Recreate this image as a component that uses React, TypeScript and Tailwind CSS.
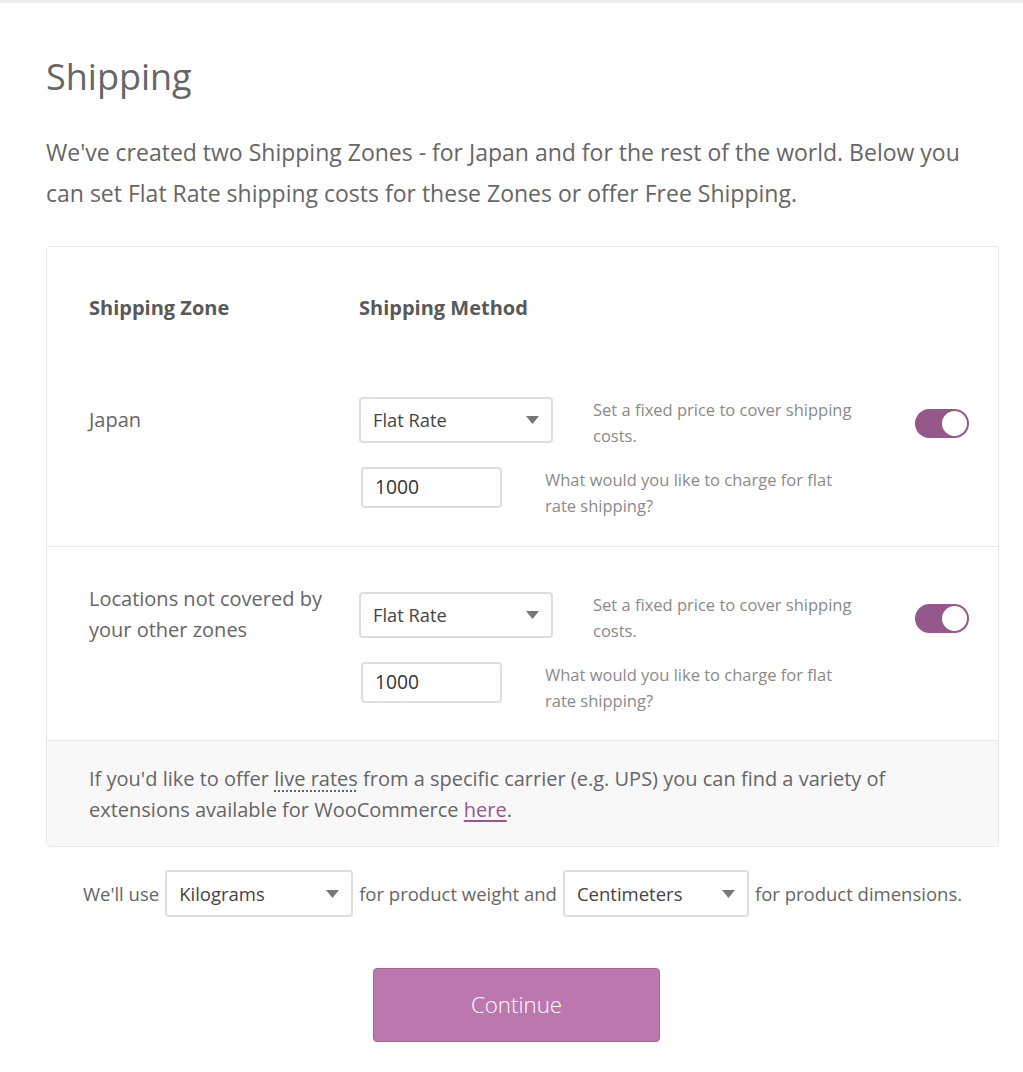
import React from "react";

const Caret: React.FC = () => (
	<svg width="13" height="8" viewBox="0 0 13 8" className="shrink-0">
		<path d="M0 0h13L6.5 8z" fill="#777" />
	</svg>
);

const Select: React.FC<{ value: string; className?: string }> = ({ value, className }) => (
	<div className={`flex items-center justify-between rounded-[4px] border-2 border-[#dedede] bg-white pl-[12px] pr-[12px] ${className ?? ""}`}>
		<span className="text-[#444]">{value}</span>
		<Caret />
	</div>
);

const Toggle: React.FC = () => (
	<div className="flex h-[29px] w-[54px] shrink-0 items-center justify-end rounded-full bg-[#96588a] pr-[2px]">
		<div className="h-[25px] w-[25px] rounded-full bg-white" />
	</div>
);

const ZoneRow: React.FC<{ zone: React.ReactNode; zoneClass: string; pad: string }> = ({ zone, zoneClass, pad }) => (
	<div className={`grid grid-cols-[270px_1fr] pl-[42px] pr-[29px] ${pad}`}>
		<div className={`text-[20px] leading-[31px] text-[#666] ${zoneClass}`}>{zone}</div>
		<div className="flex flex-col gap-[18px]">
			<div className="flex items-start">
				<Select value="Flat Rate" className="h-[46px] w-[194px] text-[18.3px]" />
				<p className="ml-[40px] w-[280px] text-[16.5px] leading-[26px] text-[#8a8a8a]">
					Set a fixed price to cover shipping
					<br />
					costs.
				</p>
				<div className="ml-auto self-center">
					<Toggle />
				</div>
			</div>
			<div className="flex items-start">
				<div className="ml-[2px] flex h-[41px] w-[141px] items-center rounded-[4px] border-2 border-[#dedede] pl-[12px] text-[19.3px] text-[#333]">
					1000
				</div>
				<p className="ml-[43px] text-[16.5px] leading-[26px] text-[#8a8a8a]">
					What would you like to charge for flat
					<br />
					rate shipping?
				</p>
			</div>
		</div>
	</div>
);

export default function App() {
	return (
		<div className="min-h-[1072px] bg-white font-['Open_Sans',sans-serif] text-[#666]">
			<div className="h-[3px] bg-[#ececec]" />
			<div className="pl-[46px] pr-[24px]">
				<h1 className="mt-[50px] text-[36px] leading-[48px] font-normal text-[#666]">Shipping</h1>
				<p className="mt-[31px] text-[23px] leading-[41px] text-[#666]">
					We've created two Shipping Zones - for Japan and for the rest of the world. Below you can set Flat Rate shipping costs for these Zones or offer Free Shipping.
				</p>

				<div className="mt-[32px] overflow-hidden rounded-[4px] border border-[#e8e8e8]">
					<div className="grid grid-cols-[270px_1fr] pl-[42px] pt-[45px] pb-[28px] text-[20px] leading-[31px] font-bold text-[#595959]">
						<div>Shipping Zone</div>
						<div>Shipping Method</div>
					</div>
					<ZoneRow zone="Japan" zoneClass="mt-[7px]" pad="pt-[46px] pb-[27px]" />
					<div className="border-t border-[#e8e8e8]">
						<ZoneRow
							zone={
								<>
									Locations not covered by
									<br />
									your other zones
								</>
							}
							zoneClass="-mt-[9px]"
							pad="pt-[45px] pb-[26px]"
						/>
					</div>
					<div className="border-t border-[#e8e8e8] bg-[#f8f8f8] pl-[42px] pr-[20px] pt-[22px] pb-[21px] text-[20px] leading-[31px] text-[#666]">
						If you'd like to offer{" "}
						<abbr className="no-underline [text-decoration:underline_dotted] underline-offset-[4px]">live rates</abbr> from a specific carrier
						(e.g. UPS) you can find a variety of
						<br />
						extensions available for WooCommerce{" "}
						<a href="#" className="text-[#96588a] underline underline-offset-[3px]">
							here
						</a>
						.
					</div>
				</div>

				<div className="mt-[23px] flex items-center justify-center gap-[6px] text-[18.5px] text-[#666]">
					<span>We'll use</span>
					<Select value="Kilograms" className="h-[47px] w-[188px] text-[18.5px]" />
					<span>for product weight and</span>
					<Select value="Centimeters" className="h-[47px] w-[186px] text-[18.5px]" />
					<span>for product dimensions.</span>
				</div>

				<div className="mt-[51px] flex justify-center pr-[12px]">
					<button className="h-[74px] w-[287px] rounded-[4px] border border-[#a46497] bg-[#bb77ae] text-[22.3px] font-light text-white">
						Continue
					</button>
				</div>
			</div>
		</div>
	);
}
